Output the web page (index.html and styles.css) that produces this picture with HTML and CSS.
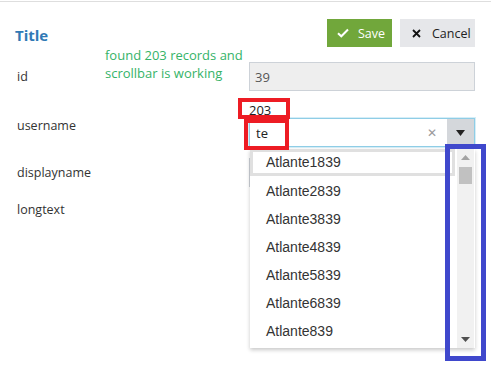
FILE: index.html
```html
<!DOCTYPE html>
<html lang="en">
<head>
  <meta charset="UTF-8" />
  <title>Edit record</title>
  <link rel="stylesheet" href="styles.css">
</head>
<body>
  <div class="page">
    <div class="header">
      <h1 class="title">Title</h1>
      <div class="actions">
        <button class="btn btn-save">
          <svg width="12" height="10" viewBox="0 0 12 10"><path d="M1 5.2 L4.3 8.3 L11 1.5" fill="none" stroke="#fff" stroke-width="2"/></svg>
          Save
        </button>
        <button class="btn btn-cancel">
          <svg width="9" height="9" viewBox="0 0 9 9"><path d="M1 1 L8 8 M8 1 L1 8" fill="none" stroke="#111" stroke-width="1.8"/></svg>
          Cancel
        </button>
      </div>
    </div>

    <div class="form">
      <div class="row row-id">
        <label>id</label>
        <input class="text-input" type="text" value="39" readonly>
      </div>

      <div class="row row-user">
        <label>username</label>
        <div class="field">
          <div class="combo">
            <input class="combo-input" type="text" value="te">
            <span class="combo-clear">&#x2715;</span>
            <span class="combo-toggle"><svg width="9" height="6" viewBox="0 0 9 6"><path d="M0 0 H9 L4.5 6 Z" fill="#222"/></svg></span>
          </div>
          <div class="popup">
            <ul class="list">
              <li class="item focused">Atlante1839</li>
              <li class="item">Atlante2839</li>
              <li class="item">Atlante3839</li>
              <li class="item">Atlante4839</li>
              <li class="item">Atlante5839</li>
              <li class="item">Atlante6839</li>
              <li class="item">Atlante839</li>
            </ul>
            <div class="scrollbar">
              <svg class="arrow" width="9" height="5" viewBox="0 0 9 5"><path d="M0 5 H9 L4.5 0 Z" fill="#a3a3a3"/></svg>
              <div class="thumb"></div>
              <div class="track"></div>
              <svg class="arrow" width="9" height="5" viewBox="0 0 9 5"><path d="M0 0 H9 L4.5 5 Z" fill="#505050"/></svg>
            </div>
          </div>
        </div>
      </div>

      <div class="row row-display">
        <label>displayname</label>
        <input class="text-input" type="text">
      </div>

      <div class="row row-long">
        <label>longtext</label>
      </div>
    </div>

    <!-- annotations drawn over the screenshot -->
    <p class="note">found 203 records and<br>scrollbar is working</p>
    <div class="mark mark-count">203</div>
    <div class="mark mark-query"></div>
    <div class="mark mark-scroll"></div>
  </div>
</body>
</html>
```

FILE: styles.css
```css
body {
  margin: 0;
  background: #fff;
  font-family: 'Open Sans', 'Noto Sans', Arial, sans-serif;
  color: #333;
}
.page {
  position: relative;
  width: 491px;
  height: 363px;
  margin-top: 1px;
  border-top: 1px solid #dedede;
  overflow: hidden;
}
.header {
  display: flex;
  justify-content: space-between;
  align-items: flex-start;
  padding: 17px 16px 0 15px;
}
.title {
  margin: 7px 0 0 0;
  font-size: 15px;
  line-height: 18px;
  font-weight: 700;
  color: #3079b5;
}
.actions {
  display: flex;
  gap: 8px;
}
.btn {
  display: flex;
  align-items: center;
  height: 28px;
  border: none;
  border-radius: 0;
  font-family: inherit;
  font-size: 12.5px;
  cursor: pointer;
}
.btn-save {
  width: 65px;
  padding: 0 0 0 10px;
  gap: 9px;
  background: #71a73b;
  color: #fff;
}
.btn-cancel {
  width: 75px;
  padding: 0 0 0 12px;
  gap: 11px;
  background: #e6e7ea;
  color: #222;
}

.form {
  padding: 0 16px 0 17px;
}
.row {
  display: grid;
  grid-template-columns: 232px 226px;
}
.row label {
  font-size: 12.5px;
  line-height: 16px;
  color: #333;
}
.row-id {
  margin-top: 15px;
  align-items: center;
}
.row-user {
  margin-top: 27px;
}
.row-display {
  margin-top: 11px;
  align-items: center;
}
.row-long {
  margin-top: 15px;
}
.text-input {
  box-sizing: border-box;
  height: 29px;
  margin: 0;
  padding: 0 5px;
  border: 1px solid #cdd2d8;
  background: #eee;
  font-family: inherit;
  font-size: 13px;
  color: #555;
  outline: none;
}
.row-display .text-input {
  background: #fff;
}

.field {
  position: relative;
}
.combo {
  display: flex;
  box-sizing: border-box;
  height: 29px;
  border: 1px solid #8fcde6;
  box-shadow: 0 0 0 1px #d6eef7;
  background: #fff;
}
.combo-input {
  flex: 1;
  min-width: 0;
  border: none;
  padding: 0 6px;
  font-family: inherit;
  font-size: 13px;
  color: #222;
  outline: none;
}
.combo-clear {
  width: 16px;
  margin-right: 7px;
  align-self: center;
  font-size: 12px;
  color: #9a9a9a;
  text-align: center;
}
.combo-toggle {
  display: flex;
  align-items: center;
  justify-content: center;
  width: 27px;
  background: #d4d7db;
}

.popup {
  position: absolute;
  top: 31px;
  left: 1px;
  width: 225px;
  height: 199px;
  display: flex;
  gap: 2px;
  background: #fff;
  box-shadow: 0 2px 4px rgba(0, 0, 0, 0.22);
  overflow: hidden;
}
.list {
  flex: 1;
  margin: 0;
  padding: 0;
  list-style: none;
}
.item {
  box-sizing: border-box;
  height: 28px;
  padding-left: 16px;
  font-family: 'Liberation Sans', Arial, sans-serif;
  font-size: 14px;
  line-height: 28px;
  color: #333;
}
.item.focused {
  height: 27px;
  margin-bottom: 1px;
  padding-left: 13px;
  line-height: 21px;
  border: 3px solid #e0e0e0;
}
.scrollbar {
  width: 17px;
  margin-right: 1px;
  display: flex;
  flex-direction: column;
  align-items: center;
  background: #f1f1f1;
}
.scrollbar .arrow {
  flex: none;
  margin: 6px 0;
}
.thumb {
  width: 13px;
  height: 17px;
  margin-top: 1px;
  background: #c1c1c1;
}
.track {
  flex: 1;
}

.note {
  position: absolute;
  top: 44px;
  left: 105px;
  margin: 0;
  font-size: 13px;
  line-height: 18px;
  color: #35b368;
}
.mark {
  position: absolute;
  box-sizing: border-box;
}
.mark-count {
  top: 96px;
  left: 238px;
  width: 52px;
  height: 21px;
  padding: 1px 0 0 7px;
  border: 4px solid #ed1c24;
  background: #fff;
  font-size: 13px;
  line-height: 14px;
  color: #222;
}
.mark-query {
  top: 117px;
  left: 244px;
  width: 45px;
  height: 31px;
  border: 4px solid #ed1c24;
}
.mark-scroll {
  top: 142px;
  left: 445px;
  width: 41px;
  height: 217px;
  border: 5px solid #3f48cc;
}
```
